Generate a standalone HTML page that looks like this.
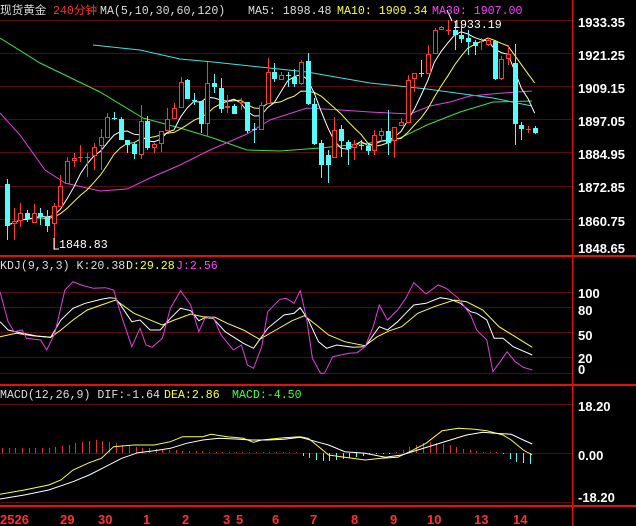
<!DOCTYPE html>
<html><head><meta charset="utf-8"><style>
html,body{margin:0;padding:0;background:#000;width:636px;height:526px;overflow:hidden}
svg{display:block}
.t{font-family:"Liberation Mono","Noto Sans CJK SC",monospace;font-size:11.6px}
.ax{font-family:"Liberation Sans",sans-serif;font-weight:bold;font-size:13px;fill:#fff}
.dt{font-family:"Liberation Sans",sans-serif;font-weight:bold;font-size:13px;fill:#ff3030}
</style></head><body>
<svg id="s" width="636" height="526" xmlns="http://www.w3.org/2000/svg">
<g id="grid" stroke="#5a0a0a" stroke-width="1"></g>
<g id="plot"></g>
<rect x="572" y="0" width="1.5" height="526" fill="#e01010"/>
<rect x="0" y="255" width="636" height="2" fill="#e01010"/>
<rect x="0" y="384" width="636" height="2" fill="#e01010"/>
<rect x="0" y="505" width="636" height="2" fill="#e01010"/>
<text class="t" x="0" y="14" fill="#ddd">现货黄金</text>
<text class="t" x="53" y="14" fill="#ff3030">240分钟</text>
<text class="t" x="100" y="14" fill="#ddd">MA(5,10,30,60,120)</text>
<text class="t" x="248" y="14" fill="#ddd">MA5: 1898.48</text>
<text class="t" x="337" y="14" fill="#ffff40">MA10: 1909.34</text>
<text class="t" x="432" y="14" fill="#ff40ff">MA30: 1907.00</text>
<text class="t" x="453" y="28" fill="#fff">1933.19</text>
<text class="t" x="59" y="248" fill="#fff">1848.83</text>
<polyline points="54,238 54,249 59,249" fill="none" stroke="#fff" stroke-width="1"/>
<text class="t" x="0" y="269" fill="#ddd">KDJ(9,3,3) K:20.38</text>
<text class="t" x="126" y="269" fill="#ffff40">D:29.28</text>
<text class="t" x="176" y="269" fill="#ff40ff">J:2.56</text>
<text class="t" x="0" y="398" fill="#ddd">MACD(12,26,9) DIF:-1.64</text>
<text class="t" x="164" y="398" fill="#ffff40">DEA:2.86</text>
<text class="t" x="232" y="398" fill="#40ff40">MACD:-4.50</text>
<g class="ax" id="ax">
<text x="578" y="27">1933.35</text><text x="578" y="60">1921.25</text><text x="578" y="93">1909.15</text>
<text x="578" y="126">1897.05</text><text x="578" y="159">1884.95</text><text x="578" y="192">1872.85</text>
<text x="578" y="226">1860.75</text><text x="578" y="253">1848.65</text>
<text x="578" y="298">100</text><text x="578" y="315">80</text><text x="578" y="340">50</text>
<text x="578" y="363">20</text><text x="578" y="374">0</text>
<text x="578" y="411">18.20</text><text x="578" y="460">0.00</text><text x="578" y="502">-18.20</text>
</g>
<g class="dt">
<text x="0" y="524">2526</text><text x="60" y="524">29</text><text x="98" y="524">30</text><text x="143" y="524">1</text>
<text x="182" y="524">2</text><text x="223" y="524">3</text><text x="236" y="524">5</text><text x="272" y="524">6</text>
<text x="310" y="524">7</text><text x="351" y="524">8</text><text x="390" y="524">9</text><text x="427" y="524">10</text>
<text x="474" y="524">13</text><text x="513" y="524">14</text>
</g>
</svg>
<script>
var NS="http://www.w3.org/2000/svg";
function el(p,n,a){var e=document.createElementNS(NS,n);for(var k in a)e.setAttribute(k,a[k]);p.appendChild(e);return e;}
var g=document.getElementById('grid'),P=document.getElementById('plot');
[20,53,86,119,152,186,219,292,307,332,357,373,404,453,502].forEach(function(y){el(g,'line',{x1:0,y1:y+.5,x2:572,y2:y+.5});});
var C=[['c',184,225,179,240],['r',221,223,208,240],['r',213,220,203,227],['c',213,218,210,222],['r',213,222,204,223],['c',213,216,208,225],['c',217,225,210,232],['r',206,223,203,250],['r',186,206,175,206],['r',161,183,157,183],
['r',158,160,153,167],['r',157,157,145,162],['r',157,157,153,177],['r',147,155,143,170],['r',137,145,129,170],['r',117,137,113,137],['c',118,118,112,120],['c',119,139,117,139],['c',140,144,140,153],['c',144,153,142,159],
['r',121,154,105,159],['c',121,147,116,150],['r',144,147,143,153],['r',131,143,131,152],['r',119,130,108,130],['r',108,118,103,118],['r',82,107,77,107],['c',80,98,79,98],['c',100,100,93,105],['c',101,123,101,133],
['r',83,123,62,137],['c',83,86,74,93],['c',88,108,78,113],['r',106,107,95,113],['c',106,113,104,114],['r',102,102,98,110],['c',102,130,102,133],['c',129,129,123,143],['r',105,129,102,130],['r',72,103,58,103],
['c',72,78,63,82],['r',75,79,72,80],['c',75,75,72,87],['c',77,83,69,87],['r',62,83,60,85],['c',61,103,53,105],['c',104,143,98,145],['c',143,164,140,178],['c',155,164,150,183],['r',130,157,117,157],
['c',129,140,125,157],['c',142,148,140,165],['r',144,147,140,160],['c',145,145,140,150],['c',146,150,144,155],['r',135,150,130,155],['r',131,135,128,140],['c',131,142,110,155],['r',127,140,127,158],['r',122,125,118,126],
['r',80,122,75,122],['r',73,78,73,92],['c',73,73,60,77],['r',54,73,45,73],['r',30,53,28,53],['r',27,29,26,30],['r',30,30,20,35],['c',30,34,22,50],['c',35,38,25,43],['c',38,41,30,55],
['c',42,45,40,55],['r',41,41,38,50],['r',40,44,38,46],['c',41,78,40,80],['r',59,78,56,80],['r',54,58,45,65],['c',63,123,44,145],['c',125,128,122,140],['r',129,129,126,133],['c',128,132,126,134]];
function X(i){return 7+i*6.68;}
function pl(pts,col){el(P,'polyline',{points:pts.map(function(p){return p[0].toFixed(1)+','+p[1].toFixed(1)}).join(' '),fill:'none',stroke:col,'stroke-width':1});}
pl([[93,45],[140,50],[180,59],[213,62],[260,67],[307,72],[370,83],[427,89],[493,98],[532,106]],'#40e0e0');
pl([[0,38],[40,63],[100,92],[143,118],[180,128],[213,138],[247,150],[280,151],[320,148],[370,143],[400,138],[427,125],[460,112],[493,102],[532,101]],'#40e040');
pl([[0,113],[20,135],[45,170],[65,183],[100,191],[127,189],[150,178],[180,165],[210,150],[247,134],[270,120],[307,108],[340,110],[370,112],[390,113],[410,114],[430,106],[450,102],[470,96],[503,93],[532,91]],'#e040e0');
var cl=C.map(function(c){return c[0]=='r'?c[1]:c[2];});
function ma(n){return cl.map(function(v,i){var s=0,k=0;for(var j=Math.max(0,i-n+1);j<=i;j++){s+=cl[j];k++;}return [X(i),s/k];});}
pl(ma(10),'#ffff40');pl(ma(5),'#ffffff');
C.forEach(function(c,i){var x=Math.round(X(i)),col=c[0]=='r'?'#ff3a2a':'#54fcfc';
 el(P,'line',{x1:x+.5,y1:c[3],x2:x+.5,y2:c[4],stroke:col,'stroke-width':1});
 var h=c[2]-c[1];
 if(h<1){el(P,'line',{x1:x-2,y1:c[1]+.5,x2:x+3,y2:c[1]+.5,stroke:col,'stroke-width':1});}
 else if(c[0]=='r'){el(P,'rect',{x:x-1.5,y:c[1]+.5,width:4,height:h,fill:'#000',stroke:col,'stroke-width':1});}
 else{el(P,'rect',{x:x-2,y:c[1],width:5,height:h+1,fill:col});}
});
el(P,'line',{x1:447,y1:10,x2:452,y2:21,stroke:'#fff','stroke-width':1});
function cv(a,off){var o=[];for(var i=0;i<a.length;i+=2)o.push([a[i]/2.465,off+a[i+1]/3]);return o;}
pl(cv([0,260,40,250,80,257,125,262,150,240,180,210,215,180,250,165,285,150,330,190,360,205,400,225,430,210,470,192,500,200,530,202,560,220,600,240,640,268,680,240,720,212,750,197,780,225,810,255,850,275,900,287,930,260,960,242,990,230,1030,190,1070,170,1120,150,1150,155,1190,180,1230,230,1270,260,1312,292],250),'#ffff40');
pl(cv([0,215,20,240,50,248,90,258,125,262,150,210,180,175,210,160,250,148,270,143,285,145,300,170,325,215,345,210,370,240,395,240,420,205,445,175,470,182,490,212,505,203,525,205,555,245,600,280,625,295,660,235,700,195,725,190,740,173,760,210,785,275,805,295,830,285,870,292,900,290,935,230,955,240,980,215,1000,190,1020,165,1050,160,1085,143,1110,148,1135,160,1160,185,1175,190,1200,210,1218,265,1240,265,1265,290,1312,315],250),'#ffffff');
pl(cv([0,125,20,215,35,245,55,240,65,265,100,270,115,300,135,250,160,120,180,95,200,105,230,115,260,113,280,120,300,200,325,290,345,235,360,285,375,292,400,265,420,175,445,122,470,165,490,245,505,205,525,200,545,255,575,300,595,285,610,345,625,355,645,290,660,185,690,148,705,145,725,160,740,122,755,200,770,325,790,370,800,370,820,320,840,315,860,310,880,308,900,290,920,230,935,165,955,210,980,180,1000,145,1020,98,1050,132,1080,105,1100,115,1130,145,1160,195,1175,240,1200,270,1215,365,1230,340,1250,305,1270,335,1290,352,1312,360],250),'#e040e0');
var H=[5,5,5,5,5,5,5,5,6,7,8,10,11,12,13,12,11,10,8,7,6,5,5,4,4,3,3,2,2,2,2,1,1,1,1,1,1,1,1,1,1,1,1,1,1,-3,-5,-7,-8,-8,-7,-6,-5,-4,-3,-1,-1,-1,-1,1,3,6,8,10,11,10,9,8,6,4,3,2,1,1,1,-1,-6,-9,-10,-11];
H.forEach(function(h,i){var x=Math.round(X(i))-5+.5;el(P,'line',{x1:x,y1:453,x2:x,y2:453-h,stroke:h>=0?'#e03030':'#54fcfc','stroke-width':1});});
pl(cv([0,343,60,330,120,315,150,300,180,270,220,248,250,235,280,200,330,195,380,195,420,185,450,170,500,170,520,163,560,170,600,175,625,187,645,180,700,173,740,170,760,175,790,205,810,225,850,232,900,240,940,235,980,232,1010,215,1050,190,1090,152,1130,145,1170,148,1200,152,1240,165,1260,180,1290,210,1312,225],380),'#ffff40');
pl(cv([0,357,60,345,120,330,180,305,220,285,260,260,300,235,340,218,380,212,420,205,460,190,500,180,540,175,580,177,620,180,660,180,700,178,740,172,780,185,810,195,850,215,900,220,950,232,990,225,1030,210,1070,195,1110,180,1150,165,1190,157,1220,160,1260,163,1290,180,1312,192],380),'#ffffff');
</script>
</body></html>
